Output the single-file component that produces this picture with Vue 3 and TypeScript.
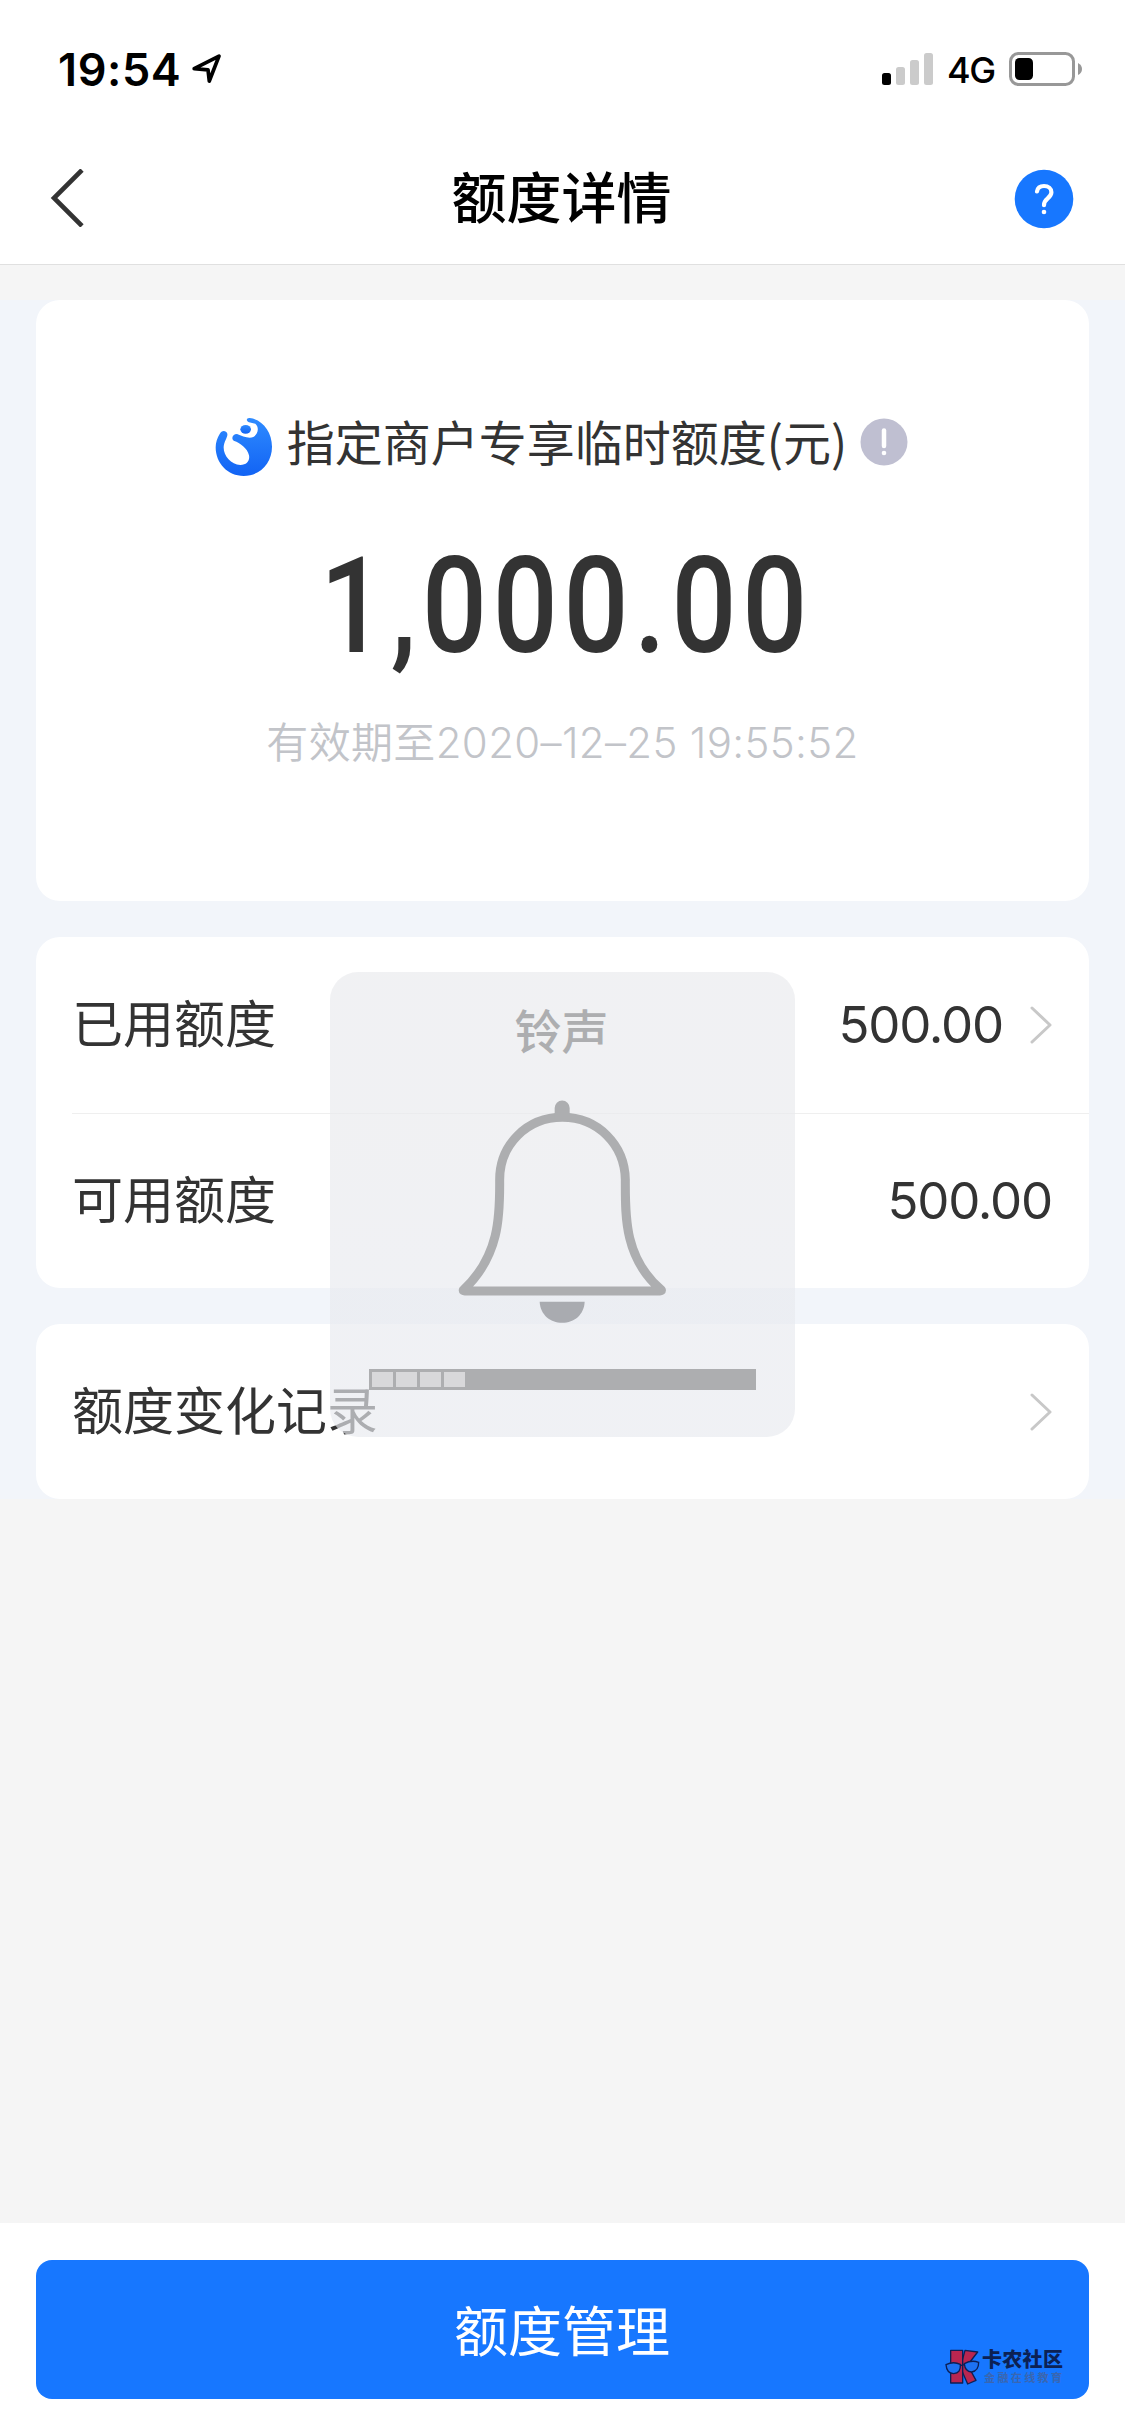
<script setup lang="ts">
interface Row {
  label: string
  value?: string
  link: boolean
}

const groups: Row[][] = [
  [
    { label: '已用额度', value: '500.00', link: true },
    { label: '可用额度', value: '500.00', link: false },
  ],
  [{ label: '额度变化记录', link: true }],
]

const volume = 4
</script>

<template>
  <div class="screen">
    <header class="top">
      <div class="status">
        <span class="time">19:54</span>
        <svg class="loc" width="32" height="32" viewBox="0 0 32 32">
          <path d="M3.2 15.6 28 3.2 18.3 28 17 16.8Z" fill="none" stroke="#000" stroke-width="3.7" stroke-linejoin="round" />
        </svg>
        <svg class="signal" width="52" height="34" viewBox="0 0 52 34">
          <rect x="0" y="21" width="9" height="12" rx="2.5" fill="#000" />
          <rect x="14" y="15" width="9" height="18" rx="2.5" fill="#cbcbcb" />
          <rect x="28" y="8" width="9" height="25" rx="2.5" fill="#cbcbcb" />
          <rect x="42" y="1" width="9" height="32" rx="2.5" fill="#cbcbcb" />
        </svg>
        <span class="net">4G</span>
        <svg class="battery" width="74" height="34" viewBox="0 0 74 34">
          <rect x="1.5" y="1.5" width="63" height="31" rx="8" fill="none" stroke="#989898" stroke-width="3" />
          <rect x="6" y="6" width="18" height="22" rx="4.5" fill="#000" />
          <path d="M69 11q4 2 4 6t-4 6z" fill="#989898" />
        </svg>
      </div>
      <nav class="nav">
        <svg class="back" width="36" height="58" viewBox="0 0 36 58">
          <path d="M32 1 4 29 32 57" fill="none" stroke="#333" stroke-width="4.6" />
        </svg>
        <h1>额度详情</h1>
        <svg class="help" width="60" height="60" viewBox="0 0 60 60">
          <circle cx="30" cy="30" r="29.3" fill="#1777ff" />
          <path d="M23 22.500C23.600 18.600 26.200 17 30 17c4.500 0 7.400 2.700 7.400 6.300 0 3-1.700 4.500-3.900 6.400-2.400 2-3.500 3.400-3.500 6.500" fill="none" stroke="#fff" stroke-width="4.200" stroke-linecap="round" />
          <circle cx="30" cy="43" r="2.300" fill="#fff" />
        </svg>
      </nav>
    </header>

    <main class="body">
      <section class="card quota">
        <div class="caption">
          <svg class="brand" width="58" height="60" viewBox="0 0 174 180">
            <defs>
              <linearGradient id="brandFill" x1="0" y1="0" x2="0" y2="1">
                <stop offset="0" stop-color="#2f8bff" />
                <stop offset="1" stop-color="#1263f4" />
              </linearGradient>
            </defs>
            <path
              fill="url(#brandFill)"
              d="M14 51C20 38 34 40 37 50C39 61 27 72 26 90C25 116 48 143 76 144C96 144 105 131 102 115C98 94 74 77 58 72C47 66 52 51 66 51C82 57 100 66 115 60C130 52 133 30 121 20L102 16C92 12 94 2 104 3C142 7 171 44 171 89C171 139 134 177 86 177C38 177 2 139 2 91C2 76 7 62 14 51Z"
            />
            <ellipse cx="92" cy="37" rx="16" ry="13" fill="url(#brandFill)" />
          </svg>
          <span class="caption-text">指定商户专享临时额度(元)</span>
          <svg class="info" width="48" height="48" viewBox="0 0 48 48">
            <circle cx="24" cy="24" r="23.500" fill="#bfbfd1" />
            <path d="M24 12.500V28" stroke="#fff" stroke-width="4.500" stroke-linecap="round" />
            <circle cx="24" cy="35" r="2.300" fill="#fff" />
          </svg>
        </div>
        <div class="amount">1,000.00</div>
        <div class="expire">有效期至<span class="date">2020–12–25 19:55:52</span></div>
      </section>

      <section v-for="(rows, g) in groups" :key="g" class="card list">
        <div v-for="row in rows" :key="row.label" class="row">
          <span class="label">{{ row.label }}</span>
          <span v-if="row.value" class="value">{{ row.value }}</span>
          <svg v-if="row.link" class="chevron" width="22" height="40" viewBox="0 0 22 40">
            <path d="M2 3 20 20 2 37" fill="none" stroke="#c8c8c8" stroke-width="3" stroke-linecap="round" stroke-linejoin="round" />
          </svg>
        </div>
      </section>
    </main>

    <footer class="bottom">
      <button class="manage">额度管理</button>
      <div class="mark">
        <svg width="35" height="36" viewBox="0 0 105 108">
          <g fill="#b92650" stroke="#0c1f55" stroke-width="4" stroke-linejoin="round">
            <path d="M60 4 98 9 68 48 93 94 68 105 46 55Z" />
            <path d="M17 4H53V102H17Z" />
          </g>
          <g fill="#1d72f2" stroke="#0c1f55" stroke-width="4">
            <path d="M3 47Q25 36 46 46Q48 73 26 74Q5 73 3 47Z" />
            <path d="M58 44Q80 32 101 40Q101 66 80 69Q60 68 58 44Z" />
            <path d="M46 50 58 47" />
          </g>
        </svg>
        <div class="mark-text">
          <b>卡农社区</b>
          <small>金融在线教育</small>
        </div>
      </div>
    </footer>

    <aside class="hud">
      <div class="hud-title">铃声</div>
      <svg class="bell" width="219" height="227" viewBox="0 0 657 681">
        <g fill="none" stroke="#adaeb0" stroke-width="27" stroke-linejoin="round">
          <path d="M328 58C222 58 140 140 140 245C140 340 145 470 31 576Q30 579 35 579H621Q626 579 625 576C512 480 517 350 517 245C515 140 434 58 328 58Z" />
        </g>
        <path d="M305 62V30a22.500 22.500 0 0 1 45 0V62Z" fill="#adaeb0" />
        <path d="M260 611H395C393 650 364 674 327.500 674S262 650 260 611Z" fill="#a9abb0" />
      </svg>
      <div class="volume">
        <i v-for="n in volume" :key="n"></i>
      </div>
    </aside>
  </div>
</template>

<style>
html,
body {
  margin: 0;
  background: #f5f5f5;
}
</style>

<style scoped>
.screen {
  position: relative;
  display: flex;
  flex-direction: column;
  width: 1125px;
  height: 2436px;
  overflow: hidden;
  background: #f5f5f5;
  color: #333;
  font-family: Inter, 'Noto Sans CJK SC', sans-serif;
}
.top {
  height: 264px;
  border-bottom: 1px solid #e0e0e0;
  background: #fff;
}
.status {
  display: flex;
  align-items: center;
  height: 138px;
  padding: 0 42px 0 58px;
  box-sizing: border-box;
  color: #000;
}
.time {
  font-size: 45px;
  font-weight: 600;
  width: 133px;
  letter-spacing: 0.6px;
  white-space: nowrap;
}
.signal {
  margin-left: auto;
}
.net {
  margin: 1px 14px 0 13px;
  width: 48px;
  font-size: 36px;
  font-weight: 500;
  letter-spacing: -1.5px;
}
.battery {
  flex: none;
}
.nav {
  display: flex;
  align-items: center;
  justify-content: space-between;
  height: 121px;
  padding: 0 51px 0 50px;
}
.back {
  width: 36px;
  margin: 0 23px 2px 0;
}
h1 {
  margin: 0 0 9px;
  color: #000;
  font: 500 55px/80px 'Noto Sans CJK SC', sans-serif;
}
.body {
  display: flex;
  flex-direction: column;
  gap: 36px;
  margin-top: 35px;
  padding: 0 36px;
  background: #f2f5fa;
}
.card {
  border-radius: 24px;
  background: #fff;
}
.quota {
  display: flex;
  flex-direction: column;
  align-items: center;
  height: 601px;
}
.caption {
  display: flex;
  align-items: center;
  height: 72px;
  margin: 107px 2px 0 0;
}
.brand {
  margin: 8px 14px 0 0;
}
.caption-text {
  margin-bottom: 6px;
  font: 400 48px/72px 'Noto Sans CJK SC', sans-serif;
  white-space: nowrap;
}
.info {
  margin: 0 0 3px 13px;
}
.amount {
  margin: 48px 0 0 8px;
  height: 160px;
  font: 500 133px/160px Roboto, sans-serif;
  letter-spacing: 6.6px;
  transform: scaleX(0.86);
  white-space: nowrap;
}
.expire {
  margin-top: 25px;
  color: #c2c4c9;
  font: 350 42px/62px Inter, 'Noto Sans CJK SC', sans-serif;
  letter-spacing: 0.35px;
  white-space: nowrap;
}
.row {
  display: flex;
  align-items: center;
  height: 175px;
  padding: 0 37px 0 36px;
}
.row + .row {
  position: relative;
}
.row + .row::before {
  content: '';
  position: absolute;
  top: 0;
  left: 36px;
  right: 0;
  height: 1px;
  background: #efefef;
}
.list .row:first-child:not(:last-child) {
  height: 176px;
}
.label {
  font: 400 51px/75px 'Noto Sans CJK SC', sans-serif;
  margin-top: -7px;
}
.value {
  margin-left: auto;
  font-size: 51px;
  font-weight: 400;
  line-height: 70px;
  letter-spacing: -1.2px;
}
.chevron {
  margin-left: 27px;
}
.label + .chevron {
  margin-left: auto;
}
.bottom {
  position: relative;
  height: 213px;
  margin-top: auto;
  padding: 37px 36px 0;
  box-sizing: border-box;
  background: #fff;
}
.manage {
  display: block;
  width: 100%;
  height: 139px;
  padding: 0 1px 2px 0;
  border: 0;
  border-radius: 16px;
  background: #1777ff;
  color: #fff;
  font: 400 54px/80px 'Noto Sans CJK SC', sans-serif;
}
.mark {
  position: absolute;
  left: 945px;
  top: 126px;
  display: flex;
  gap: 2px;
}
.mark-text {
  display: flex;
  flex-direction: column;
  white-space: nowrap;
}
.mark-text b {
  color: #0c2154;
  font: 900 20px/20px 'Noto Sans CJK SC', sans-serif;
  letter-spacing: 0.3px;
}
.mark-text small {
  margin: 1px 0 0 2px;
  color: #3a66b0;
  font: 700 11px/14px 'Noto Sans CJK SC', sans-serif;
  letter-spacing: 2.400px;
}
.hud {
  position: absolute;
  left: 330px;
  top: 972px;
  display: flex;
  flex-direction: column;
  align-items: center;
  width: 465px;
  height: 465px;
  border-radius: 28px;
  background: linear-gradient(rgba(233, 234, 237, 0.667) 30%, rgba(232, 234, 239, 0.667) 75%);
}
.hud-title {
  margin: 23px 2px 0 0;
  color: #adaeb0;
  font: 500 47px/68px 'Noto Sans CJK SC', sans-serif;
}
.bell {
  margin-top: 35px;
}
.volume {
  display: flex;
  gap: 3px;
  box-sizing: border-box;
  width: 387px;
  height: 21px;
  margin-top: 44px;
  padding: 3px;
  background: #adaeb0;
}
.volume i {
  width: 21px;
  background: #d8d8da;
}
</style>
